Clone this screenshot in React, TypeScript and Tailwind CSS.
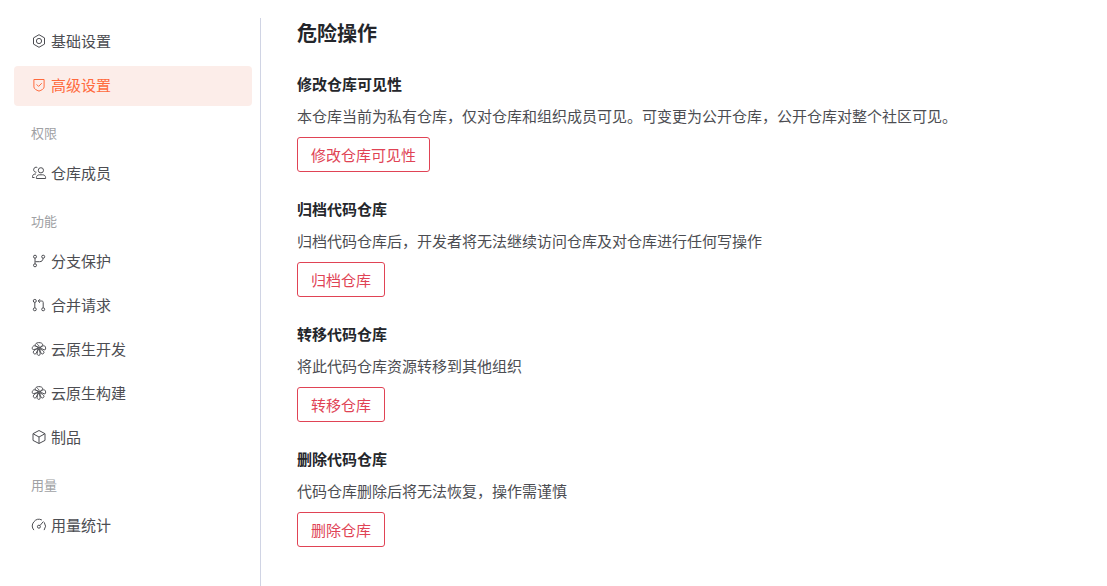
import type { ReactNode } from "react";

type IconName =
  | "setting"
  | "shield"
  | "members"
  | "branch"
  | "pull"
  | "octopus"
  | "cube"
  | "gauge";

// every icon is drawn on a 16 x 16 grid with a thin stroke
const icons: Record<IconName, ReactNode> = {
  setting: (
    <>
      <path d="M8 1.700 13.500 4.900v6.200L8 14.300 2.500 11.100V4.900Z" />
      <circle cx="8" cy="8" r="2.600" />
    </>
  ),
  shield: (
    <>
      <path d="M2.900 2.500h10.200v7.400c0 2-2.400 3.200-5.100 4.200-2.700-1-5.100-2.200-5.100-4.200Z" />
      <path d="m5.600 7.400 2 2 3.200-3.200" />
    </>
  ),
  members: (
    <>
      <circle cx="9.900" cy="5.300" r="2.600" />
      <path d="M5.400 13.500v-.8c0-1.800 1.300-2.900 2.900-2.900h3.400c1.600 0 2.900 1.100 2.900 2.900v.8Z" />
      <path d="M6.300 2.500A2.500 2.500 0 1 0 5.400 7.200" />
      <path d="M5 9h-.8c-1.600 0-2.700 1.100-2.700 2.700v.8h2" />
    </>
  ),
  branch: (
    <>
      <circle cx="4" cy="3.700" r="1.500" />
      <circle cx="4" cy="12.300" r="1.500" />
      <circle cx="12.200" cy="3.700" r="1.500" />
      <path d="M4 5.200v5.600M4.300 8.700h4.200c2.300 0 3.400-1.200 3.600-3.500" />
    </>
  ),
  pull: (
    <>
      <circle cx="3.800" cy="3.900" r="1.500" />
      <circle cx="3.800" cy="12.300" r="1.500" />
      <circle cx="12.200" cy="12.300" r="1.500" />
      <path d="M3.800 5.400v5.400M7.300 4h3.400c1 0 1.500.5 1.500 1.500v5.300M9 2.200 7.200 4 9 5.800" />
    </>
  ),
  octopus: (
    <>
      <path d="M8.300 6.800C6.700 5.800 4.800 5.300 4.200 4.400 3.900 2.900 5.500 1.700 7.600 1.600c2.400-.1 4.200.9 4.100 2.200-.3 1.300-2 1.900-3.400 3Z" />
      <path d="M7.400 6.900C6 5.700 4.100 4.300 2.600 4.900 1.200 5.700.9 7.400 1.600 8.300c.9.900 3.700-.5 5.800-1.400Z" />
      <path d="M7.300 7.500c-2.300.7-4.700 1.700-5 3.400-.1 1.300.9 2.300 1.900 2.100 1.300-.3 2.100-3.200 3.100-5.500Z" />
      <path d="M7.900 7.600c-1.200 1.800-2.200 4.300-1.700 5.800.6 1.100 2 1.300 2.700.5.800-1.100-.3-4.100-1-6.300Z" />
      <path d="M8.500 7.600c.7 2 1.100 4.700 2.300 5.300 1.200.4 2.300-.6 2.200-1.700-.2-1.400-2.700-2.700-4.500-3.600Z" />
      <path d="M8.900 7c2 .1 4.200 2.600 5.200 1.800.9-.8.700-3-.5-3.900C12.100 4.300 10.200 5.700 8.900 7Z" />
      <path d="M8.300 6.800c-.1-1.600-.8-2.900-2-3.600" />
    </>
  ),
  cube: (
    <path d="M8 1.500 14 4.700v6.700L8 14.500 2 11.400V4.700ZM2.300 4.900 8 8l5.700-3.100M8 8v6.300" />
  ),
  gauge: (
    <>
      <path d="M2.900 13.100A6.600 6.600 0 0 1 10.900 3M13.200 5.300a6.600 6.600 0 0 1-.1 7.800" />
      <circle cx="7.900" cy="9.700" r="1.500" />
      <path d="m9 8.500 3.400-4" />
    </>
  ),
};

const groups: { title?: string; items: { label: string; icon: IconName }[] }[] = [
  {
    items: [
      { label: "基础设置", icon: "setting" },
      { label: "高级设置", icon: "shield" },
    ],
  },
  { title: "权限", items: [{ label: "仓库成员", icon: "members" }] },
  {
    title: "功能",
    items: [
      { label: "分支保护", icon: "branch" },
      { label: "合并请求", icon: "pull" },
      { label: "云原生开发", icon: "octopus" },
      { label: "云原生构建", icon: "octopus" },
      { label: "制品", icon: "cube" },
    ],
  },
  { title: "用量", items: [{ label: "用量统计", icon: "gauge" }] },
];

const actions = [
  {
    title: "修改仓库可见性",
    text: "本仓库当前为私有仓库，仅对仓库和组织成员可见。可变更为公开仓库，公开仓库对整个社区可见。",
    button: "修改仓库可见性",
  },
  {
    title: "归档代码仓库",
    text: "归档代码仓库后，开发者将无法继续访问仓库及对仓库进行任何写操作",
    button: "归档仓库",
  },
  {
    title: "转移代码仓库",
    text: "将此代码仓库资源转移到其他组织",
    button: "转移仓库",
  },
  {
    title: "删除代码仓库",
    text: "代码仓库删除后将无法恢复，操作需谨慎",
    button: "删除仓库",
  },
];

function Icon({ name }: { name: IconName }) {
  return (
    <svg
      viewBox="0 0 16 16"
      className="size-4 shrink-0"
      fill="none"
      stroke="currentColor"
      strokeWidth="1"
      aria-hidden="true"
    >
      {icons[name]}
    </svg>
  );
}

function Sidebar() {
  const active = "高级设置";
  return (
    <nav className="w-[247px] shrink-0 border-r border-[#d0d4e4] pt-1 pr-2">
      {groups.map((group, i) => (
        <div key={i}>
          {group.title && (
            <h3 className="mt-[17px] mb-[11px] px-[17px] text-[13px] leading-5 text-[#a0a1a4]">
              {group.title}
            </h3>
          )}
          <ul className="flex flex-col gap-1">
            {group.items.map((item) => (
              <li key={item.label}>
                <a
                  href="#"
                  className={
                    item.label === active
                      ? "flex h-10 items-center gap-1 rounded bg-[#fcede9] px-[17px] pb-0.5 text-[#ff6a3d]"
                      : "flex h-10 items-center gap-1 rounded px-[17px] pb-0.5 text-[#4c4d52]"
                  }
                >
                  <Icon name={item.icon} />
                  {item.label}
                </a>
              </li>
            ))}
          </ul>
        </div>
      ))}
    </nav>
  );
}

export default function App() {
  return (
    <div className="flex min-h-screen bg-white pt-[18px] pl-[14px] font-['Noto_Sans_CJK_SC',sans-serif] text-[15px] leading-6 text-[#4c4d52]">
      <Sidebar />
      <main className="min-w-0 flex-1 px-9">
        <h1 className="text-xl leading-[30px] font-bold text-[#24262b]">危险操作</h1>
        <div className="mt-6 flex flex-col gap-[25px]">
          {actions.map((action) => (
            <section key={action.title}>
              <h2 className="font-bold text-[#24262b]">{action.title}</h2>
              <p className="mt-2">{action.text}</p>
              <button
                type="button"
                className="mt-[9px] h-[35px] rounded-[3px] border border-[#e04355] px-[13px] text-[#e04355]"
              >
                {action.button}
              </button>
            </section>
          ))}
        </div>
      </main>
    </div>
  );
}
